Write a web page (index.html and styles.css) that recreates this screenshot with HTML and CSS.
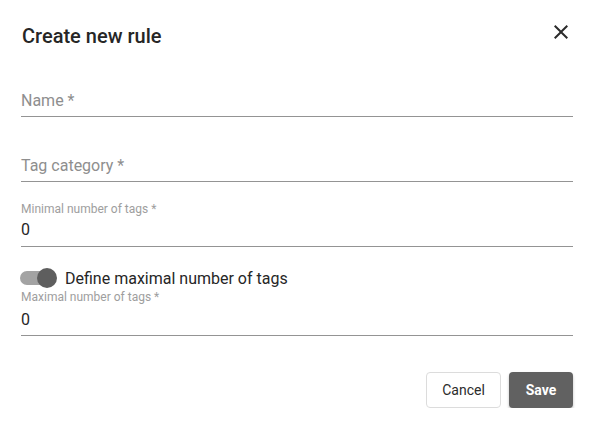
FILE: index.html
```html
<!DOCTYPE html>
<html>
<head>
<meta charset="utf-8">
<link rel="stylesheet" href="styles.css">
</head>
<body>
<div class="dialog">
  <div class="header">
    <div class="title">Create new rule</div>
    <svg class="close" width="24" height="24" viewBox="0 0 24 24"><path d="M19 6.41L17.59 5 12 10.59 6.41 5 5 6.41 10.59 12 5 17.59 6.41 19 12 13.41 17.59 19 19 17.59 13.41 12z" fill="#2b2b2b"/></svg>
  </div>
  <div class="field f-name"><div class="value placeholder">Name *</div></div>
  <div class="field f-tag"><div class="value placeholder">Tag category *</div></div>
  <div class="field f-min">
    <div class="label">Minimal number of tags *</div>
    <div class="value">0</div>
  </div>
  <div class="toggle-row">
    <div class="toggle"><div class="track"></div><div class="knob"></div></div>
    <div class="toggle-label">Define maximal number of tags</div>
  </div>
  <div class="field f-max">
    <div class="label">Maximal number of tags *</div>
    <div class="value">0</div>
  </div>
  <div class="actions">
    <button class="btn cancel">Cancel</button>
    <button class="btn save">Save</button>
  </div>
</div>
</body>
</html>
```
FILE: styles.css
```css
html, body { margin: 0; padding: 0; background: #fff; }
body { font-family: Roboto, "Liberation Sans", sans-serif; color: #212121; }
.dialog { padding: 24px 21px 0 21px; }
.header { display: flex; justify-content: space-between; align-items: flex-start; }
.title { font-size: 20px; font-weight: 500; line-height: 24px; color: #262626; padding-left: 1px; }
.close { margin-top: -4px; display: block; }
.field { border-bottom: 1px solid #949494; padding-bottom: 6px; }
.value { font-size: 16px; line-height: 19px; color: #262626; }
.placeholder { color: #8e8e8e; }
.label { font-size: 12px; line-height: 14px; color: #9e9e9e; }
.f-name { margin-top: 43px; }
.f-tag { margin-top: 39px; }
.f-min { margin-top: 20px; padding-bottom: 7px; }
.f-min .label { margin-bottom: 4px; }
.toggle-row { display: flex; align-items: center; margin-top: 21px; height: 20px; }
.toggle { position: relative; width: 37px; height: 20px; margin-left: -1px; }
.track { position: absolute; left: 0; top: 3px; width: 36px; height: 14px; border-radius: 7px; background: #a3a3a3; }
.knob { position: absolute; right: 0; top: 0; width: 20px; height: 20px; border-radius: 50%; background: #5e5e5e; }
.toggle-label { margin-left: 8px; font-size: 16px; line-height: 19px; color: #262626; }
.f-max { margin-top: 2px; }
.f-max .label { margin-bottom: 6px; }
.actions { display: flex; justify-content: flex-end; gap: 8px; margin-top: 36px; }
.btn { height: 36px; border-radius: 4px; font-family: Roboto, "Liberation Sans", sans-serif; font-size: 14px; padding: 0; }
.cancel { width: 75px; background: #fff; border: 1px solid #dcdcdc; color: #2b2b2b; font-weight: 400; }
.save { width: 64px; background: #616161; border: none; color: #fff; font-weight: 700; box-shadow: 0 2px 3px rgba(0,0,0,0.25); }
```
